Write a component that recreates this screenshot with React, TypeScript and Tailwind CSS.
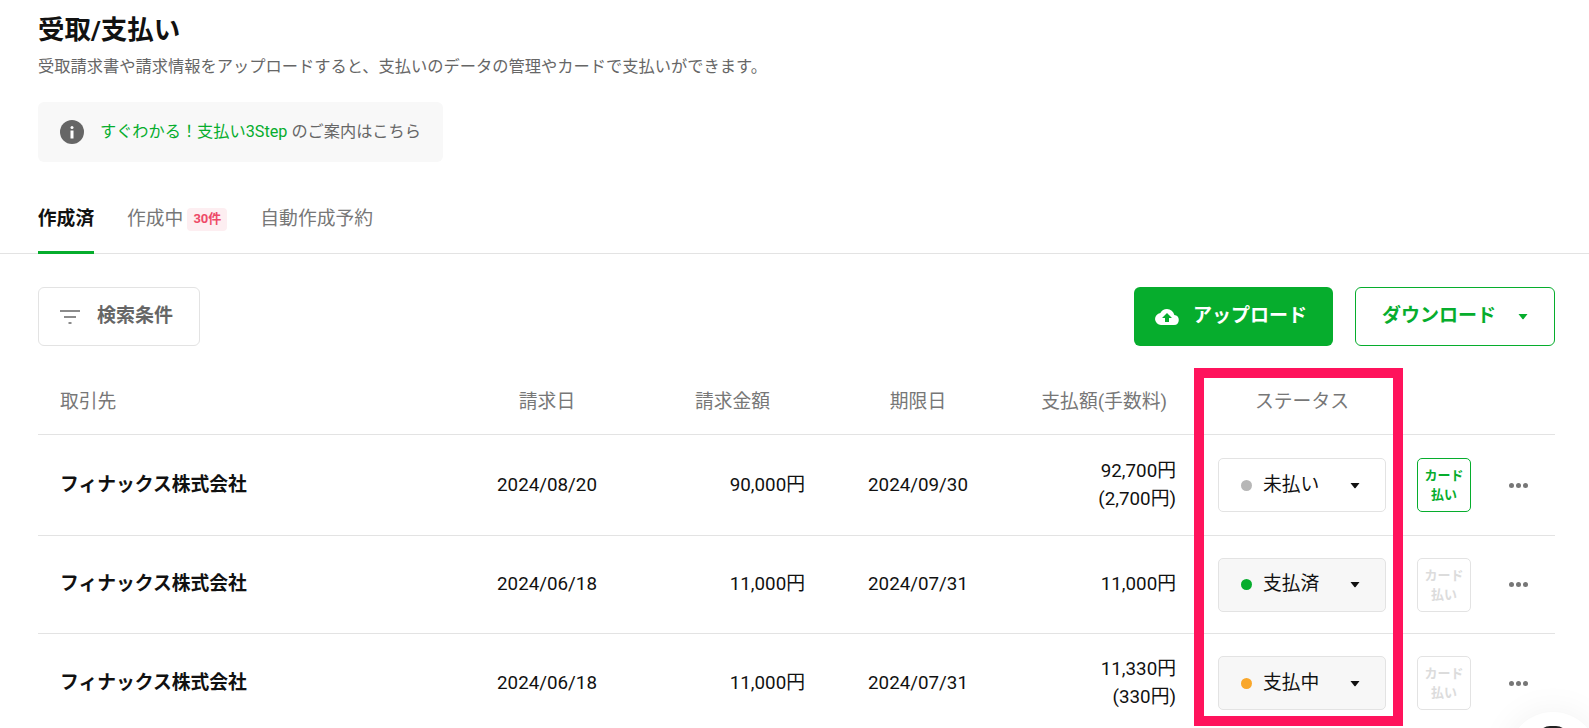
import React from 'react';

const rowGrid = 'grid grid-cols-[459px_100px_208px_226px_145px_241px_54px_84px] items-center';

const rows = [
    { date: '2024/08/20', amount: '90,000円', due: '2024/09/30', paid: '92,700円', fee: '(2,700円)', status: '未払い', dot: 'bg-[#b7b7b7]', box: 'bg-white', active: true, h: 'h-[101px]' },
    { date: '2024/06/18', amount: '11,000円', due: '2024/07/31', paid: '11,000円', fee: '', status: '支払済', dot: 'bg-[#06ad2d]', box: 'bg-[#f7f7f7]', active: false, h: 'h-[98px]' },
    { date: '2024/06/18', amount: '11,000円', due: '2024/07/31', paid: '11,330円', fee: '(330円)', status: '支払中', dot: 'bg-[#f9a72b]', box: 'bg-[#f7f7f7]', active: false, h: 'h-[98px]' },
];

const Caret = ({ className }: { className: string }) => (
    <svg width="10" height="7" viewBox="0 0 10 7" className={className}>
        <path d="M0.5 1h9L5.6 6a.8.8 0 0 1-1.2 0z" fill="currentColor" />
    </svg>
);

const App: React.FC = () => {
    return (
        <div className="relative h-[728px] w-[1589px] overflow-hidden bg-white font-['Roboto','Noto_Sans_CJK_JP',sans-serif] text-[#111]">
            <div className="px-[38px] pt-[12px]">
                <h1 className="text-[26.5px] font-bold leading-[36px]">受取/支払い</h1>
                <p className="mt-[7px] text-[16.25px] leading-[24px] text-[#666]">受取請求書や請求情報をアップロードすると、支払いのデータの管理やカードで支払いができます。</p>
                <div className="mt-[23px] flex h-[60px] w-[405px] items-center rounded-[6px] bg-[#f8f8f8] pl-[22px]">
                    <span className="flex h-[24px] w-[24px] items-center justify-center rounded-full bg-[#666]">
                        <svg width="4" height="13" viewBox="0 0 4 13">
                            <circle cx="2" cy="1.5" r="1.5" fill="#fff" />
                            <rect x="0.5" y="4.5" width="3" height="8" fill="#fff" />
                        </svg>
                    </span>
                    <span className="ml-[16px] text-[16.2px] text-[#666]">
                        <span className="text-[#06ad2d]">すぐわかる！支払い3Step</span> のご案内はこちら
                    </span>
                </div>
            </div>

            {/* Tabs */}
            <div className="mt-[34px] flex h-[58px] items-start border-b border-[#e3e3e3] px-[38px]">
                <div className="flex h-[58px] w-[56px] justify-center whitespace-nowrap border-b-[3px] border-[#06ad2d] pt-[9px] text-[18.8px] font-bold leading-[28px]">作成済</div>
                <div className="ml-[33px] flex items-center pt-[9px] text-[18.8px] leading-[28px] text-[#777]">
                    作成中
                    <span className="ml-[4px] flex h-[23px] w-[40px] items-center justify-center rounded-[4px] bg-[#fdeef1] text-[13px] font-bold text-[#ee4a68]">30件</span>
                </div>
                <div className="ml-[33px] pt-[9px] text-[18.8px] leading-[28px] text-[#777]">自動作成予約</div>
            </div>

            {/* Toolbar */}
            <div className="mt-[33px] flex items-center pl-[38px] pr-[34px]">
                <button className="flex h-[59px] w-[162px] items-center rounded-[6px] border border-[#e3e3e3] bg-white pl-[21px] text-[19px] font-bold text-[#666]">
                    <svg width="20" height="14" viewBox="0 0 20 14">
                        <path d="M0 1h20M4 7h12M8.5 13h3" stroke="#666" strokeWidth="1.6" fill="none" />
                    </svg>
                    <span className="ml-[17px]">検索条件</span>
                </button>
                <button className="ml-auto flex h-[59px] w-[199px] items-center rounded-[6px] bg-[#06ad2d] pl-[21px] text-[19px] font-bold text-white">
                    <svg width="24" height="18" viewBox="0 0 24 16">
                        <path d="M19.35 6.04A7.49 7.49 0 0 0 12 0a7.5 7.5 0 0 0-6.65 4.04A6 6 0 0 0 6 16h13a5 5 0 0 0 .35-9.96zM14 9v4h-4V9H7l5-5 5 5h-3z" fill="#fff" />
                    </svg>
                    <span className="ml-[14px]">アップロード</span>
                </button>
                <button className="ml-[22px] flex h-[59px] w-[200px] items-center rounded-[6px] border border-[#06ad2d] bg-white pl-[26px] text-[19px] font-bold text-[#06ad2d]">
                    ダウンロード
                    <Caret className="ml-[22px] text-[#06ad2d]" />
                </button>
            </div>

            {/* Table */}
            <div className="mx-[38px] mt-[24px] w-[1517px]">
                <div className={`${rowGrid} h-[65px] border-b border-[#e3e3e3] text-[18.8px] text-[#777]`}>
                    <div className="pl-[22px]">取引先</div>
                    <div className="text-center">請求日</div>
                    <div className="pr-[35px] text-right">請求金額</div>
                    <div className="text-center">期限日</div>
                    <div className="whitespace-nowrap pr-[9px] text-right">支払額(手数料)</div>
                    <div className="pl-[42px] pr-[31px] text-center">ステータス</div>
                </div>
                {rows.map((r, i) => (
                    <div key={i} className={`${rowGrid} ${r.h} ${i < 2 ? 'border-b border-[#e3e3e3]' : ''} text-[18.8px]`}>
                        <div className="pl-[22px] font-bold">フィナックス株式会社</div>
                        <div className="text-center">{r.date}</div>
                        <div className="text-right">{r.amount}</div>
                        <div className="text-center">{r.due}</div>
                        <div className="text-right leading-[28.5px]">
                            <div>{r.paid}</div>
                            {r.fee && <div>{r.fee}</div>}
                        </div>
                        <div className="pl-[42px]">
                            <div className={`flex h-[54px] w-[168px] items-center rounded-[5px] border border-[#e3e3e3] pl-[22px] ${r.box}`}>
                                <span className={`h-[11px] w-[11px] rounded-full ${r.dot}`} />
                                <span className="ml-[11px] w-[87px]">{r.status}</span>
                                <Caret className="text-[#111]" />
                            </div>
                        </div>
                        <div className={`flex h-[54px] w-[54px] flex-col items-center justify-center rounded-[5px] border text-[13px] font-bold leading-[19px] ${r.active ? 'border-[#06ad2d] text-[#06ad2d]' : 'border-[#e3e3e3] text-[#dcdcdc]'}`}>
                            <span>カード</span>
                            <span>払い</span>
                        </div>
                        <div className="flex justify-end gap-[2px] pr-[27px]">
                            <span className="h-[5px] w-[5px] rounded-full bg-[#777]" />
                            <span className="h-[5px] w-[5px] rounded-full bg-[#777]" />
                            <span className="h-[5px] w-[5px] rounded-full bg-[#777]" />
                        </div>
                    </div>
                ))}
            </div>

            {/* highlight frame drawn over the status column */}
            <div className="absolute left-[1194px] top-[368px] h-[358px] w-[209px] border-[10px] border-[#ff135c]" />

            {/* floating button cut off by the bottom edge */}
            <div className="absolute left-[1508px] top-[712px] flex h-[90px] w-[90px] justify-center rounded-full bg-white pt-[14px] shadow-[0_0_36px_rgba(0,0,0,0.06)]">
                <div className="h-[24px] w-[30px] rounded-t-[12px] bg-[#222]" />
            </div>
        </div>
    );
};

export default App;
